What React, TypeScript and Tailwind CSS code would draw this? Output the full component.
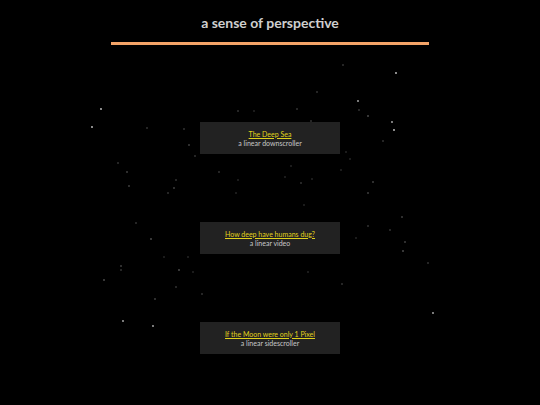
const stars: [number, number, number][] = [
  [101, 109, 0.8], [92, 127, 0.8], [147, 128, 0.4], [184, 129, 0.4], [189, 145, 0.5],
  [195, 156, 0.4], [118, 163, 0.4], [127, 172, 0.5], [129, 186, 0.5], [176, 180, 0.4],
  [174, 188, 0.5], [168, 193, 0.4], [238, 111, 0.4], [254, 111, 0.3], [219, 172, 0.4],
  [238, 180, 0.3], [236, 193, 0.3], [343, 65, 0.4], [396, 73, 0.8], [317, 92, 0.4],
  [358, 101, 0.7], [297, 109, 0.4], [359, 110, 0.4], [368, 116, 0.6], [392, 122, 0.7],
  [394, 130, 0.8], [383, 141, 0.4], [311, 121, 0.4], [346, 152, 0.3], [350, 159, 0.3],
  [341, 170, 0.3], [291, 166, 0.3], [285, 177, 0.3], [301, 183, 0.4], [373, 182, 0.5],
  [368, 193, 0.5], [312, 179, 0.3], [136, 223, 0.4], [151, 239, 0.6], [121, 266, 0.5],
  [121, 270, 0.4], [104, 280, 0.6], [164, 257, 0.3], [179, 270, 0.6], [176, 287, 0.4],
  [155, 299, 0.5], [123, 321, 0.7], [153, 326, 0.7], [193, 272, 0.3], [202, 294, 0.4],
  [188, 257, 0.3], [402, 217, 0.5], [390, 230, 0.4], [368, 226, 0.4], [405, 242, 0.5],
  [403, 251, 0.6], [428, 263, 0.4], [433, 313, 0.7], [342, 284, 0.4], [308, 272, 0.3],
  [304, 205, 0.3], [356, 238, 0.3],
]

const links = [
  { title: 'The Deep Sea', sub: 'a linear downscroller' },
  { title: 'How deep have humans dug?', sub: 'a linear video' },
  { title: 'If the Moon were only 1 Pixel', sub: 'a linear sidescroller' },
]

export default function App() {
  return (
    <div className="relative min-h-[405px] w-full overflow-hidden bg-black" style={{ fontFamily: 'Lato, "Open Sans", sans-serif' }}>
      {/* starfield backdrop */}
      <svg className="absolute inset-0" width="540" height="405" viewBox="0 0 540 405">
        {stars.map(([x, y, o], i) => (
          <circle key={i} cx={x} cy={y} r={o > 0.6 ? 0.9 : 0.7} fill="#ffffff" opacity={o} />
        ))}
      </svg>

      <div className="relative flex flex-col items-center">
        <h1 className="pt-[14px] text-[14px] font-bold leading-[18px] text-[#cfcfcf]">a sense of perspective</h1>
        <div className="mt-[10px] h-[3px] w-[318px] bg-[#f4a468]" />

        <div className="mt-[77px] flex flex-col gap-[68px]">
          {links.map((l) => (
            <div key={l.title} className="flex h-[32px] w-[140px] flex-col items-center justify-center bg-[#222222] pt-px text-[7px] leading-[9px]">
              <a href="#" className="text-[#e0d21c] underline">{l.title}</a>
              <span className="text-[#c8c8c8]">{l.sub}</span>
            </div>
          ))}
        </div>
      </div>
    </div>
  )
}
